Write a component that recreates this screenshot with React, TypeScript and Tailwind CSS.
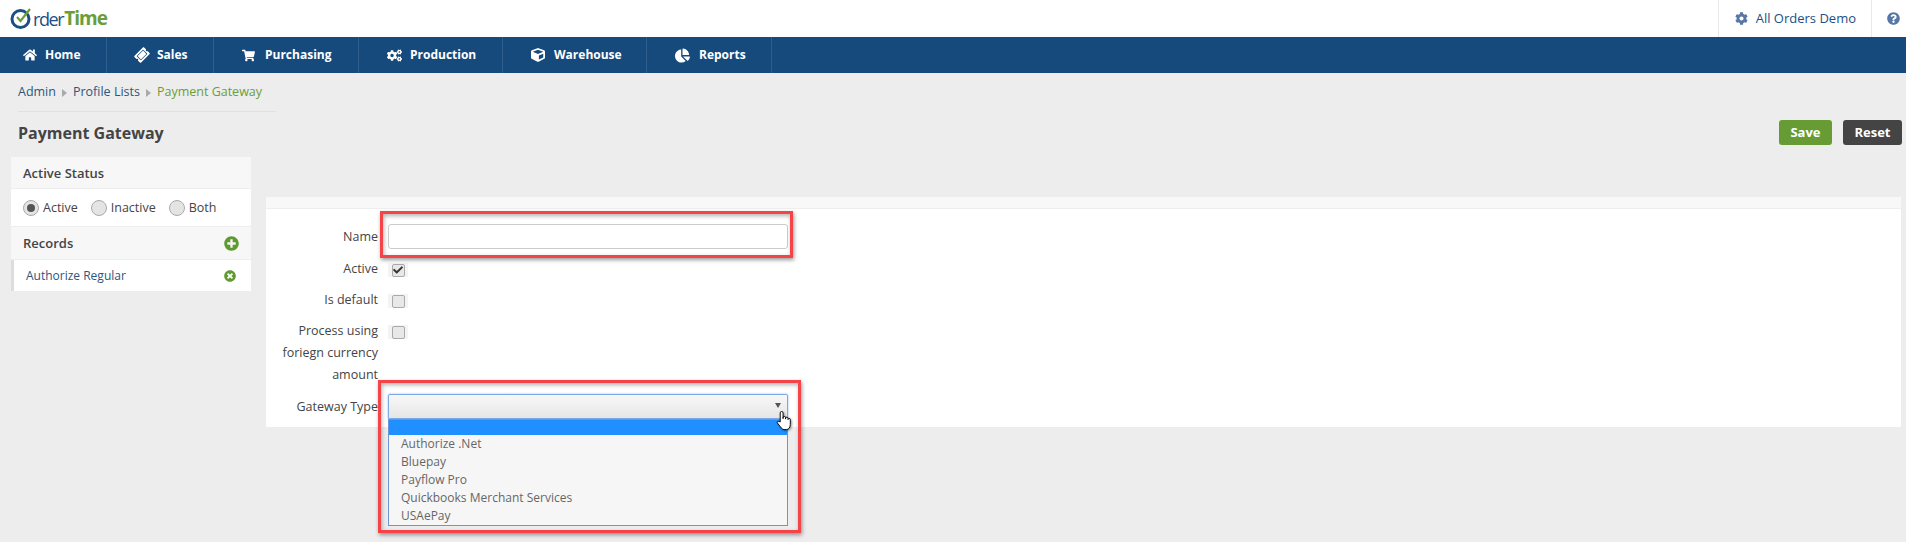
import { FaChartPie, FaCheck, FaCog, FaCogs, FaCube, FaHome, FaPlusCircle, FaQuestionCircle, FaShoppingCart, FaTicketAlt, FaTimesCircle } from "react-icons/fa";
import type { IconType } from "react-icons";

const navItems: { label: string; icon: IconType; cell: string; iconClass: string; slot: string }[] = [
  { label: "Home", icon: FaHome, cell: "w-[107px] pl-[23px]", iconClass: "text-[14px]", slot: "w-[22px]" },
  { label: "Sales", icon: FaTicketAlt, cell: "w-[107px] pl-[28px]", iconClass: "text-[14px] -rotate-45", slot: "w-[22px]" },
  { label: "Purchasing", icon: FaShoppingCart, cell: "w-[145px] pl-[28px]", iconClass: "text-[13px]", slot: "w-[23px]" },
  { label: "Production", icon: FaCogs, cell: "w-[144px] pl-[28px]", iconClass: "text-[15px]", slot: "w-[23px]" },
  { label: "Warehouse", icon: FaCube, cell: "w-[144px] pl-[28px]", iconClass: "text-[14px]", slot: "w-[23px]" },
  { label: "Reports", icon: FaChartPie, cell: "w-[125px] pl-[28px]", iconClass: "text-[15px]", slot: "w-[24px]" },
];

const gatewayOptions = ["Authorize .Net", "Bluepay", "Payflow Pro", "Quickbooks Merchant Services", "USAePay"];

function Radio({ label, checked = false }: { label: string; checked?: boolean }) {
  return (
    <span className="flex items-center gap-[4px]">
      <span className="flex h-4 w-4 items-center justify-center rounded-full border border-[#aaa] bg-[#e4e4e4]">
        {checked && <span className="h-2 w-2 rounded-full bg-[#555]" />}
      </span>
      {label}
    </span>
  );
}

function Checkbox({ checked = false }: { checked?: boolean }) {
  return (
    <span className="flex h-[14px] w-[20px] items-center justify-center bg-[#f4f4f4]">
      <span className="flex h-[13px] w-[13px] items-center justify-center rounded-[2px] border border-[#aaa] bg-[#e8e8e8] text-[#333]">
        {checked && <FaCheck className="text-[10px]" />}
      </span>
    </span>
  );
}

function Crumb() {
  return <span className="h-0 w-0 border-y-[4px] border-l-[5px] border-y-transparent border-l-[#aaa]" />;
}

function FormRow({ label, children, className = "", labelClass = "leading-[22px]" }: { label: React.ReactNode; children?: React.ReactNode; className?: string; labelClass?: string }) {
  return (
    <div className={`flex ${className}`}>
      <label className={`w-[112px] shrink-0 text-right text-[12.500px] font-medium ${labelClass}`}>{label}</label>
      <div className="ml-[10px] w-[400px]">{children}</div>
    </div>
  );
}

export default function App() {
  return (
    <div className="relative h-[542px] overflow-hidden bg-[#ededed] font-['Open_Sans',sans-serif] text-[13px] text-[#444]">
      {/* Top bar */}
      <header className="flex h-[37px] items-center justify-between bg-white">
        <div className="ml-[10px] flex items-center text-[19px] font-bold leading-none tracking-[-1px]">
          <svg width="23" height="22" viewBox="0 0 23 22" className="mb-[1px]">
            <circle cx="10.500" cy="12" r="8.500" fill="none" stroke="#1d4f84" strokeWidth="3" />
            <path d="M7 10l3.500 4L20 2" fill="none" stroke="#6a9e38" strokeWidth="2.200" />
          </svg>
          <span className="text-[18px] font-normal tracking-[-1.4px] text-[#1d4f84]">rder</span>
          <span className="ml-[1px] text-[#6a9e38]">Time</span>
        </div>
        <div className="flex h-full items-start">
          <div className="flex h-full items-center gap-2 border-x border-[#e8e8e8] pl-[16px] pr-[15px] text-[#1e4e85]">
            <FaCog className="text-[13px] text-[#5877a6]" />
            All Orders Demo
          </div>
          <div className="flex h-full w-[34px] items-center justify-end pr-[6px]">
            <FaQuestionCircle className="text-[13px] text-[#5877a6]" />
          </div>
        </div>
      </header>

      {/* Main navigation */}
      <nav className="flex h-[36px] bg-[#174a7c] text-[12px] font-bold text-white">
        {navItems.map((item) => (
          <a key={item.label} className={`flex items-center border-r border-[#2f5d8a] ${item.cell}`}>
            <span className={`shrink-0 ${item.slot}`}>
              <item.icon className={item.iconClass} />
            </span>
            {item.label}
          </a>
        ))}
      </nav>

      <div className="flex gap-[15px] pl-[11px] pr-[4px]">
        {/* Left column */}
        <aside className="w-[240px] shrink-0">
          <div className="ml-[7px] flex h-[39px] w-[258px] items-center gap-[6px] border-b border-[#e0e0e4] pt-[1px] text-[12.500px] text-[#2c5680]">
            Admin
            <Crumb />
            Profile Lists
            <Crumb />
            <span className="text-[#6a9e38]">Payment Gateway</span>
          </div>
          <h1 className="ml-[7px] mt-[9px] h-[36px] text-[16px] font-bold leading-[24px]">Payment Gateway</h1>
          <section className="bg-white">
            <h2 className="flex h-[32px] items-center border-b border-[#eee] bg-[#f7f7f7] px-[12px] pt-[2px] text-[13px] font-semibold">Active Status</h2>
            <div className="flex h-[38px] items-center gap-[13px] border-b border-[#eee] px-[12px] pt-[1px] text-[12.500px]">
              <Radio label="Active" checked />
              <Radio label="Inactive" />
              <Radio label="Both" />
            </div>
            <h2 className="flex h-[33px] items-center justify-between border-b border-[#eee] bg-[#f7f7f7] px-[12px] pt-[1px] text-[13px] font-semibold">
              Records
              <FaPlusCircle className="text-[15px] text-[#5f9a2f]" />
            </h2>
            <div className="flex h-[31px] items-center justify-between border-l-[3px] border-[#ddd] pl-[12px] pr-[15px] text-[12px] text-[#2c5680]">
              Authorize Regular
              <FaTimesCircle className="text-[12px] text-[#5f9a2f]" />
            </div>
          </section>
        </aside>

        {/* Form panel */}
        <main className="flex-1">
          <div className="flex h-[72px] items-start justify-end gap-[11px] pt-[47px]">
            <button className="h-[25px] w-[53px] rounded-[3px] bg-[#669c33] font-bold text-white">Save</button>
            <button className="h-[25px] w-[59px] rounded-[3px] bg-[#444] font-bold text-white">Reset</button>
          </div>
          <div className="mr-[1px] mt-[52px] h-[230px] bg-white">
            <div className="h-[12px] border-b border-[#eee] bg-[#f8f8f8]" />
            <div className="pt-[15px]">
              <FormRow label="Name" className="h-[34px]" labelClass="leading-[25px]">
                <div className="h-[25px] w-[400px] rounded-[3px] border border-[#ccc] bg-white" />
              </FormRow>
              <FormRow label="Active" className="h-[31px]">
                <div className="pt-[5px]"><Checkbox checked /></div>
              </FormRow>
              <FormRow label="Is default" className="h-[31px]">
                <div className="pt-[5px]"><Checkbox /></div>
              </FormRow>
              <FormRow label={<>Process using<br />foriegn currency<br />amount</>} className="h-[74px]">
                <div className="pt-[5px]"><Checkbox /></div>
              </FormRow>
              <FormRow label="Gateway Type" labelClass="leading-[25px]">
                <div className="relative flex h-[25px] w-[400px] items-center justify-end rounded-t-[2px] border border-[#7fa9e6] bg-linear-to-b from-[#f8f8f8] to-[#e6e6e6] pr-[6px] shadow-[0_0_2px_#7fa9e6]">
                  <span className="mb-[2px] h-0 w-0 border-x-[3px] border-t-[5px] border-x-transparent border-t-[#555]" />
                  <ul className="absolute left-[-1px] top-[24px] z-10 w-[400px] border border-[#6c94d6] bg-[#f6f6f6] text-[12px] leading-[18px] text-[#666]">
                    <li className="h-[15px] bg-[#1e90ff]" />
                    {gatewayOptions.map((opt) => (
                      <li key={opt} className="pl-[12px]">{opt}</li>
                    ))}
                  </ul>
                </div>
              </FormRow>
            </div>
          </div>
        </main>
      </div>

      {/* Annotation boxes */}
      <div className="pointer-events-none absolute left-[380px] top-[211px] h-[47px] w-[413px] border-[3px] border-[#f44448] shadow-[1px_2px_4px_rgba(0,0,0,0.4),inset_1px_2px_4px_rgba(0,0,0,0.3)]" />
      <div className="pointer-events-none absolute left-[378px] top-[380px] z-20 h-[153px] w-[423px] border-[3px] border-[#f44448] shadow-[1px_2px_4px_rgba(0,0,0,0.4),inset_1px_2px_4px_rgba(0,0,0,0.3)]" />

      {/* Mouse cursor */}
      <svg viewBox="0 0 17 21" className="absolute left-[776px] top-[411px] z-30 h-[20px] w-[17px] drop-shadow-[1px_1px_1px_rgba(0,0,0,0.4)]">
        <path
          d="M4 11.500V2a1.500 1.500 0 0 1 3 0v6V7a1.300 1.300 0 0 1 2.600 0v1.500V7.800a1.300 1.300 0 0 1 2.600 0v1V9a1.200 1.200 0 0 1 2.400 0v5c0 3-1.500 5.500-4 5.500H8C6 19.500 4.500 17 3 15L1 12.500c-.8-1 .5-2.300 1.500-1.500z"
          fill="#fff"
          stroke="#000"
          strokeWidth="1"
        />
      </svg>
    </div>
  );
}
